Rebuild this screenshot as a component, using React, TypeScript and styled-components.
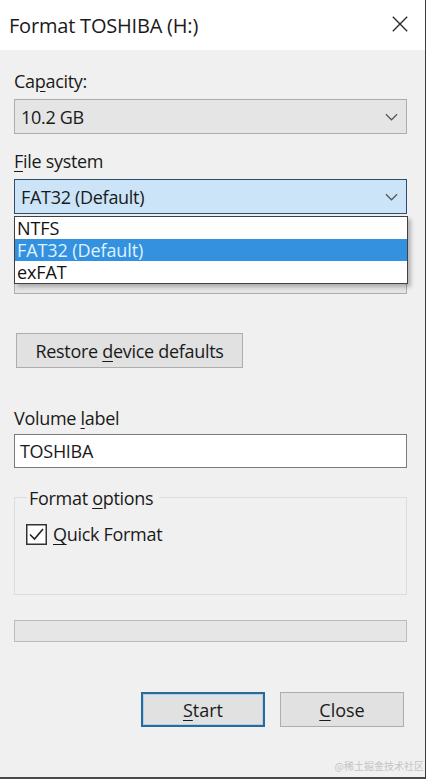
import React from 'react';
import styled, { createGlobalStyle } from 'styled-components';

const GlobalStyle = createGlobalStyle`
  html, body {
    margin: 0;
    padding: 0;
    background: #ffffff;
  }
  body {
    font-family: 'Open Sans', 'Noto Sans', 'Noto Sans CJK SC', sans-serif;
    color: #1a1a1a;
  }
`;

type ComboVariant = 'plain' | 'focused';

const fileSystems = ['NTFS', 'FAT32 (Default)', 'exFAT'];

export default function App() {
  return (
    <>
      <GlobalStyle />
      <Window>
        <TitleBar>
          <Title>Format TOSHIBA (H:)</Title>
          <CloseIcon viewBox="0 0 20 20">
            <path d="M2 2 L18 18 M18 2 L2 18" stroke="#222" strokeWidth="1.4" fill="none" />
          </CloseIcon>
        </TitleBar>

        <Body>
          <Label>
            Ca<u>p</u>acity:
          </Label>
          <Combo variant="plain">
            <span>10.2 GB</span>
            <Chevron />
          </Combo>

          <Label $top={15}>
            <u>F</u>ile system
          </Label>
          <DropHolder>
            <Combo variant="focused">
              <span>FAT32 (Default)</span>
              <Chevron />
            </Combo>
            <DropList>
              {fileSystems.map((fs) => (
                <DropItem key={fs} $selected={fs === 'FAT32 (Default)'}>
                  {fs}
                </DropItem>
              ))}
            </DropList>
          </DropHolder>

          {/* allocation unit combo, covered by the open list */}
          <Combo variant="plain" $top={46} $height={34} />

          <RestoreButton>
            <span>
              Restore <u>d</u>evice defaults
            </span>
          </RestoreButton>

          <Label $top={38} $bottom={4}>
            Volume <u>l</u>abel
          </Label>
          <TextBox>TOSHIBA</TextBox>

          <GroupBox>
            <Legend>
              Format <u>o</u>ptions
            </Legend>
            <CheckRow>
              <CheckBox viewBox="0 0 21 21">
                <rect x="0.75" y="0.75" width="19.5" height="19.5" fill="#fff" stroke="#333" strokeWidth="1.5" />
                <path d="M4 10.5 L8.5 15 L17 5" stroke="#222" strokeWidth="1.6" fill="none" />
              </CheckBox>
              <span>
                <u>Q</u>uick Format
              </span>
            </CheckRow>
          </GroupBox>

          <Progress />

          <ButtonRow>
            <DialogButton $primary>
              <span>
                <u>S</u>tart
              </span>
            </DialogButton>
            <DialogButton>
              <span>
                <u>C</u>lose
              </span>
            </DialogButton>
          </ButtonRow>

          <Watermark>@稀土掘金技术社区</Watermark>
        </Body>
      </Window>
    </>
  );
}

function Chevron() {
  return (
    <ChevronIcon viewBox="0 0 14 8">
      <path d="M1 1 L7 7 L13 1" stroke="#555" strokeWidth="1.3" fill="none" />
    </ChevronIcon>
  );
}

const Window = styled.div`
  width: 425px;
  height: 777px;
  background: #f0f0f0;
  border-right: 1px solid #3a3a3a;
  border-bottom: 2px solid #4a4a4a;
  display: flex;
  flex-direction: column;
  overflow: hidden;
`;

const TitleBar = styled.div`
  height: 50px;
  background: #ffffff;
  display: flex;
  align-items: center;
  justify-content: space-between;
  padding: 0 16px 0 9px;
  flex-shrink: 0;
`;

const Title = styled.div`
  font-size: 20px;
  color: #1a1a1a;
  letter-spacing: -0.2px;
  margin-top: 1px;
`;

const CloseIcon = styled.svg`
  width: 18px;
  height: 18px;
  margin-top: -3px;
`;

const Body = styled.div`
  position: relative;
  flex: 1;
  display: flex;
  flex-direction: column;
  padding: 19px 18px 0 14px;
`;

const Label = styled.div<{ $top?: number; $bottom?: number }>`
  font-size: 18px;
  line-height: 24px;
  margin-top: ${(p) => p.$top ?? 0}px;
  margin-bottom: ${(p) => p.$bottom ?? 6}px;
  letter-spacing: -0.3px;

  u {
    text-underline-offset: 3px;
  }
`;

const Combo = styled.div<{ variant: ComboVariant; $top?: number; $height?: number }>`
  height: ${(p) => p.$height ?? 35}px;
  margin-top: ${(p) => p.$top ?? 0}px;
  box-sizing: border-box;
  display: flex;
  align-items: center;
  justify-content: space-between;
  padding: 0 8px 0 6px;
  font-size: 18px;
  letter-spacing: -0.3px;
  background: ${(p) => (p.variant === 'focused' ? '#cce4f7' : '#e5e5e5')};
  border: 1px solid ${(p) => (p.variant === 'focused' ? '#2d4d6b' : '#adadad')};
`;

const ChevronIcon = styled.svg`
  width: 13px;
  height: 8px;
`;

const DropHolder = styled.div`
  position: relative;
`;

const DropList = styled.div`
  position: absolute;
  left: 0;
  right: -1px;
  top: 37px;
  background: #ffffff;
  border: 1px solid #404040;
  box-shadow: 3px 3px 4px rgba(0, 0, 0, 0.25);
  z-index: 2;
`;

const DropItem = styled.div<{ $selected?: boolean }>`
  height: 22px;
  line-height: 22px;
  padding-left: 2px;
  font-size: 18px;
  letter-spacing: -0.1px;
  background: ${(p) => (p.$selected ? '#3391e0' : 'transparent')};
  color: ${(p) => (p.$selected ? '#dff2ff' : '#111')};
`;

const RestoreButton = styled.div`
  align-self: flex-start;
  margin: 39px 0 0 2px;
  width: 227px;
  height: 35px;
  box-sizing: border-box;
  display: flex;
  align-items: center;
  justify-content: center;
  font-size: 18px;
  letter-spacing: -0.3px;
  background: #e1e1e1;
  border: 1px solid #adadad;

  u {
    text-underline-offset: 3px;
  }
`;

const TextBox = styled.div`
  height: 34px;
  box-sizing: border-box;
  display: flex;
  align-items: center;
  padding-left: 5px;
  font-size: 18px;
  letter-spacing: -0.3px;
  background: #ffffff;
  border: 1px solid #7a7a7a;
`;

const GroupBox = styled.div`
  margin-top: 29px;
  height: 98px;
  box-sizing: border-box;
  border: 1px solid #dcdcdc;
  padding: 0 0 0 11px;
  display: flex;
  flex-direction: column;
`;

const Legend = styled.div`
  align-self: flex-start;
  margin: -12px 0 0 1px;
  padding: 0 6px 0 2px;
  background: #f0f0f0;
  font-size: 18px;
  line-height: 24px;
  letter-spacing: -0.3px;

  u {
    text-underline-offset: 3px;
  }
`;

const CheckRow = styled.div`
  display: flex;
  align-items: center;
  gap: 6px;
  margin-top: 12px;
  font-size: 18px;
  line-height: 24px;
  letter-spacing: -0.3px;

  u {
    text-underline-offset: 3px;
  }
`;

const CheckBox = styled.svg`
  width: 21px;
  height: 21px;
`;

const Progress = styled.div`
  margin-top: 25px;
  height: 22px;
  box-sizing: border-box;
  background: #e6e6e6;
  border: 1px solid #bcbcbc;
`;

const ButtonRow = styled.div`
  display: flex;
  justify-content: flex-end;
  gap: 15px;
  margin: 50px 3px 0 0;
`;

const DialogButton = styled.div<{ $primary?: boolean }>`
  width: 124px;
  height: 35px;
  box-sizing: border-box;
  display: flex;
  align-items: center;
  justify-content: center;
  font-size: 18px;
  background: #e1e1e1;
  border: ${(p) => (p.$primary ? '2px solid #2b6a97' : '1px solid #adadad')};
  box-shadow: ${(p) => (p.$primary ? 'inset 0 0 0 1px #a9d3f2' : 'none')};

  u {
    text-underline-offset: 3px;
  }
`;

const Watermark = styled.div`
  position: absolute;
  right: 1px;
  bottom: 4px;
  font-family: 'Noto Sans CJK SC', sans-serif;
  font-size: 10px;
  color: #c4c4c4;
`;
